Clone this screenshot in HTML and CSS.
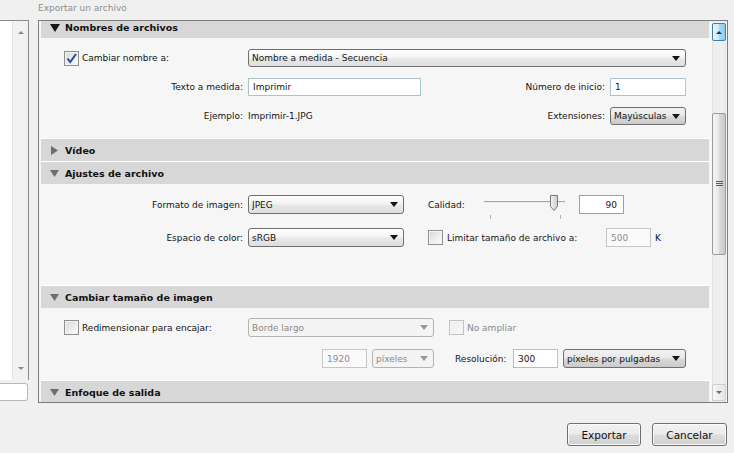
FILE: index.html
```html
<!DOCTYPE html>
<html lang="es">
<head>
<meta charset="utf-8">
<title>Exportar un archivo</title>
<link rel="stylesheet" href="styles.css">
</head>
<body>
<div class="title">Exportar un archivo</div>
<div class="main">
  <div class="side">
    <div class="list">
      <div class="list-sb"><span class="mini-up"></span><span class="mini-dn"></span></div>
    </div>
    <div class="side-input"></div>
  </div>
  <div class="panel">
    <div class="sections">
      <div class="hdr hdr-first">
        <svg class="tri tri-big" width="10" height="8" viewBox="0 0 10 8"><polygon points="0,0 10,0 5,8" fill="#161616"/></svg>Nombres de archivos
      </div>
      <div class="content c1">
        <div class="row">
          <div class="lead"><span class="cb"><svg width="13" height="13" viewBox="0 0 13 13"><path d="M2.5 6.5 L5.2 10 L11 2" fill="none" stroke="#2b48a8" stroke-width="2"/></svg></span><span>Cambiar nombre a:</span></div>
          <div class="sel sel-white w-name"><span class="txt">Nombre a medida - Secuencia</span><span class="arr"></span></div>
        </div>
        <div class="row">
          <div class="lbl">Texto a medida:</div>
          <div class="inp w-text">Imprimir</div>
          <div class="right"><span>Número de inicio:</span><div class="inp w-76">1</div></div>
        </div>
        <div class="row">
          <div class="lbl">Ejemplo:</div>
          <div class="plain">Imprimir-1.JPG</div>
          <div class="right"><span>Extensiones:</span><div class="sel sel-gray w-76"><span class="txt">Mayúsculas</span><span class="arr"></span></div></div>
        </div>
      </div>
      <div class="hdr">
        <svg class="tri" width="9" height="9" viewBox="0 0 9 9"><polygon points="1,0 8,4.5 1,9" fill="#6e6e6e"/></svg>Vídeo
      </div>
      <div class="hdr">
        <svg class="tri" width="9" height="7" viewBox="0 0 9 7"><polygon points="0,0 9,0 4.5,7" fill="#6e6e6e"/></svg>Ajustes de archivo
      </div>
      <div class="content c3">
        <div class="row">
          <div class="lbl">Formato de imagen:</div>
          <div class="sel sel-white w-156"><span class="txt">JPEG</span><span class="arr"></span></div>
          <div class="qual-lbl">Calidad:</div>
          <svg class="slider" width="81" height="19" viewBox="0 0 81 19">
            <line x1="0" y1="6.5" x2="81" y2="6.5" stroke="#a8a8a8"/>
            <line x1="0" y1="7.5" x2="81" y2="7.5" stroke="#e9e9e9"/>
            <line x1="6.5" y1="20" x2="6.5" y2="24" stroke="#b0b0b0"/>
            <line x1="76.5" y1="20" x2="76.5" y2="24" stroke="#b0b0b0"/>
            <defs><linearGradient id="th" x1="0" y1="0" x2="1" y2="0"><stop offset="0" stop-color="#f4f4f4"/><stop offset="1" stop-color="#c8c8c8"/></linearGradient></defs>
            <polygon points="66.5,0.5 73.5,0.5 73.5,11.5 70,15.5 66.5,11.5" fill="url(#th)" stroke="#7b7b7b"/>
          </svg>
          <div class="inp inp-teal w-45 num">90</div>
        </div>
        <div class="row">
          <div class="lbl">Espacio de color:</div>
          <div class="sel sel-white w-156"><span class="txt">sRGB</span><span class="arr"></span></div>
          <span class="cb cb-gap"></span>
          <div class="lim-lbl">Limitar tamaño de archivo a:</div>
          <div class="inp dis w-45">500</div>
          <div class="unit">K</div>
        </div>
      </div>
      <div class="hdr">
        <svg class="tri" width="9" height="7" viewBox="0 0 9 7"><polygon points="0,0 9,0 4.5,7" fill="#6e6e6e"/></svg>Cambiar tamaño de imagen
      </div>
      <div class="content c4">
        <div class="row">
          <div class="lead"><span class="cb"></span><span>Redimensionar para encajar:</span></div>
          <div class="sel sel-dis w-186"><span class="txt">Borde largo</span><span class="arr"></span></div>
          <span class="cb cb-dis cb-gap2"></span>
          <div class="dis-txt">No ampliar</div>
        </div>
        <div class="row">
          <div class="spacer"></div>
          <div class="grp">
            <div class="inp dis w-45">1920</div>
            <div class="sel sel-dis w-62"><span class="txt">píxeles</span><span class="arr"></span></div>
          </div>
          <div class="res-lbl">Resolución:</div>
          <div class="inp w-45">300</div>
          <div class="sel sel-gray w-123"><span class="txt">píxeles por pulgadas</span><span class="arr"></span></div>
        </div>
      </div>
      <div class="hdr">
        <svg class="tri" width="9" height="7" viewBox="0 0 9 7"><polygon points="0,0 9,0 4.5,7" fill="#6e6e6e"/></svg>Enfoque de salida
      </div>
    </div>
    <div class="vsb">
      <div class="sb-btn sb-up"><span class="sb-arr-up"></span></div>
      <div class="track">
        <div class="thumb">
          <svg width="7" height="6" viewBox="0 0 7 6"><line x1="0" y1="0.5" x2="7" y2="0.5" stroke="#5a5a5a"/><line x1="0" y1="2.5" x2="7" y2="2.5" stroke="#5a5a5a"/><line x1="0" y1="4.5" x2="7" y2="4.5" stroke="#5a5a5a"/></svg>
        </div>
      </div>
      <div class="sb-btn sb-dn"><span class="sb-arr-dn"></span></div>
    </div>
  </div>
</div>
<div class="footer">
  <div class="btn">Exportar</div>
  <div class="btn btn-c">Cancelar</div>
</div>
</body>
</html>
```

FILE: styles.css
```css
* { box-sizing: border-box; }
html, body { margin: 0; padding: 0; }
body {
  width: 734px;
  height: 453px;
  overflow: hidden;
  background: #f0f0f0;
  font-family: "DejaVu Sans", Verdana, sans-serif;
  font-size: 9px;
  color: #141414;
}
.title {
  height: 20px;
  line-height: 17px;
  padding-left: 38px;
  color: #8e8e8e;
}
.main { display: flex; height: 383px; }

/* left list */
.side { width: 29px; margin-right: 9px; display: flex; flex-direction: column; }
.list {
  height: 360px;
  background: #fff;
  border-top: 1px solid #8a8a8a;
  border-right: 1px solid #8a8a8a;
  display: flex;
  justify-content: flex-end;
}
.list-sb {
  width: 16px;
  background: #f1f1f1;
  border-left: 1px solid #e4e4e4;
  display: flex;
  flex-direction: column;
  justify-content: space-between;
  align-items: center;
  padding: 10px 0 10px;
}
.mini-up { width: 0; height: 0; border-left: 3px solid transparent; border-right: 3px solid transparent; border-bottom: 3px solid #8c8c8c; }
.mini-dn { width: 0; height: 0; border-left: 3px solid transparent; border-right: 3px solid transparent; border-top: 3px solid #8c8c8c; }
.side-input {
  margin-top: 3px;
  width: 28px;
  height: 18px;
  background: #fff;
  border: 1px solid #b9b9b9;
  border-left: 0;
  border-radius: 0 3px 3px 0;
}

/* panel */
.panel {
  width: 690px;
  height: 383px;
  border: 1px solid #7c7c7c;
  background: #f6f6f6;
  display: flex;
  gap: 3px;
  padding: 0 1px 0 2px;
}
.sections {
  width: 668px;
  height: 381px;
  overflow: hidden;
  display: flex;
  flex-direction: column;
}
.hdr {
  flex: none;
  height: 23px;
  background: #d7d7d7;
  border-top: 1px solid #ffffff;
  display: flex;
  align-items: center;
  padding-left: 9px;
  font-weight: bold;
  font-size: 9.5px;
  color: #111;
}
.hdr-first { height: 17px; border-top: 0; padding-bottom: 4px; }
.tri { flex: none; margin-right: 6px; }
.tri-big { margin-right: 5px; }

.content { flex: none; display: flex; flex-direction: column; }
.c1 { padding: 11px 0 13px; gap: 11px; }
.c3 { padding: 11px 0 38px; gap: 14px; }
.c4 { padding: 10px 0 12px; gap: 12px; }
.row { display: flex; align-items: center; height: 18px; padding-right: 23px; white-space: nowrap; }
.c3 .row, .c4 .row { height: 19px; }

.lbl { flex: none; width: 202px; margin-right: 5px; text-align: right; }
.lead { flex: none; width: 207px; padding-left: 23px; display: flex; align-items: center; }
.lead .cb { margin-right: 3px; }
.spacer { flex: none; width: 207px; }
.right { margin-left: auto; display: flex; align-items: center; gap: 5px; height: 100%; }
.plain { padding-left: 0; }

/* checkbox */
.cb {
  flex: none;
  width: 15px;
  height: 15px;
  border: 1px solid #8e8f8f;
  background: linear-gradient(135deg, #d8d8d8, #f2f2f2 70%, #fdfdfd);
  box-shadow: inset 0 0 0 1px #f4f4f4;
  display: flex;
  align-items: center;
  justify-content: center;
}
.cb svg { display: block; }
.cb-gap { margin-left: 24px; margin-right: 4px; }
.cb-dis { border-color: #c2c2c2; background: linear-gradient(135deg, #ececec, #f8f8f8); }
.cb-gap2 { margin-left: 15px; margin-right: 3px; }

/* select */
.sel {
  flex: none;
  height: 100%;
  border: 1px solid #6f6f6f;
  border-radius: 3px;
  display: flex;
  align-items: center;
  padding-left: 3px;
  overflow: hidden;
}
.sel .txt { flex: 1; overflow: hidden; }
.sel .arr {
  flex: none;
  width: 0; height: 0;
  margin: 0 5px 0 3px;
  border-left: 4px solid transparent;
  border-right: 4px solid transparent;
  border-top: 5px solid #151515;
}
.sel-white { background: linear-gradient(#fefefe, #f4f4f4 45%, #e8e8e8 55%, #dedede); }
.sel-gray { background: linear-gradient(#f2f2f2, #e9e9e9 45%, #d8d8d8 55%, #cbcbcb); }
.sel-dis { border-color: #b4b4b4; background: #f4f4f4; color: #8a8a8a; }
.sel-dis .arr { border-top-color: #9a9a9a; }

/* input */
.inp {
  flex: none;
  height: 100%;
  border: 1px solid #a9c3cf;
  background: #fff;
  padding: 0 4px;
  display: flex;
  align-items: center;
}
.inp-teal { border-color: #7faab5; }
.num { justify-content: flex-end; padding-right: 6px; }
.dis { border-color: #c6c6c6; color: #8d8d8d; background: #fafafa; }

.w-name { width: 438px; }
.w-text { width: 173px; }
.w-76 { width: 76px; }
.w-156 { width: 156px; }
.w-45 { width: 45px; }
.w-186 { width: 186px; }
.w-62 { width: 62px; }
.w-123 { width: 123px; }

.qual-lbl { flex: none; width: 56px; margin-left: 24px; }
.slider { flex: none; overflow: visible; align-self: flex-start; margin-right: 14px; }
.lim-lbl { flex: none; width: 159px; }
.unit { margin-left: 4px; }
.dis-txt { color: #8a8a8a; }
.grp { flex: none; width: 186px; height: 100%; display: flex; justify-content: flex-end; gap: 5px; }
.res-lbl { flex: none; width: 58px; margin-left: 21px; }
.c4 .row .inp + .sel-gray { margin-left: 5px; }

/* panel scrollbar */
.vsb {
  flex: none;
  width: 14px;
  height: 381px;
  display: flex;
  flex-direction: column;
  padding: 2px 0 1px;
  background: #efefef;
  border-left: 1px solid #e2e2e2;
  border-right: 1px solid #e2e2e2;
}
.sb-btn { flex: none; display: flex; align-items: center; justify-content: center; border-radius: 2px; }
.sb-up {
  height: 18px;
  margin: 0 -1px;
  border: 1px solid #3c7fb1;
  background: linear-gradient(to right, #eaf6fd, #c9e9f9 50%, #a7d9f5 51%, #8fcdef);
}
.sb-arr-up { width: 0; height: 0; border-left: 3px solid transparent; border-right: 3px solid transparent; border-bottom: 3px solid #1d3b57; }
.track { flex: 1; }
.thumb {
  margin: 72px -1px 0;
  height: 142px;
  border: 1px solid #9a9a9a;
  border-radius: 2px;
  background: linear-gradient(to right, #f4f4f4, #e9e9e9 45%, #d9d9d9 55%, #c9c9c9);
  display: flex;
  align-items: center;
  justify-content: center;
}
.thumb svg { display: block; }
.sb-dn {
  height: 17px;
  margin: 0 -1px;
  border: 1px solid #cfcfcf;
  background: linear-gradient(to right, #f6f6f6, #e6e6e6);
}
.sb-arr-dn { width: 0; height: 0; border-left: 3px solid transparent; border-right: 3px solid transparent; border-top: 3px solid #6a6a6a; }

/* footer */
.footer { display: flex; justify-content: flex-end; gap: 11px; padding: 20px 7px 0 0; }
.btn {
  width: 74px;
  height: 23px;
  border: 1px solid #707070;
  border-radius: 3px;
  background: linear-gradient(#f2f2f2, #ebebeb 48%, #dddddd 52%, #cfcfcf);
  box-shadow: inset 0 0 0 1px #fbfbfb;
  font-size: 10.5px;
  color: #111;
  display: flex;
  align-items: center;
  justify-content: center;
}
.btn-c { width: 75px; }
```
